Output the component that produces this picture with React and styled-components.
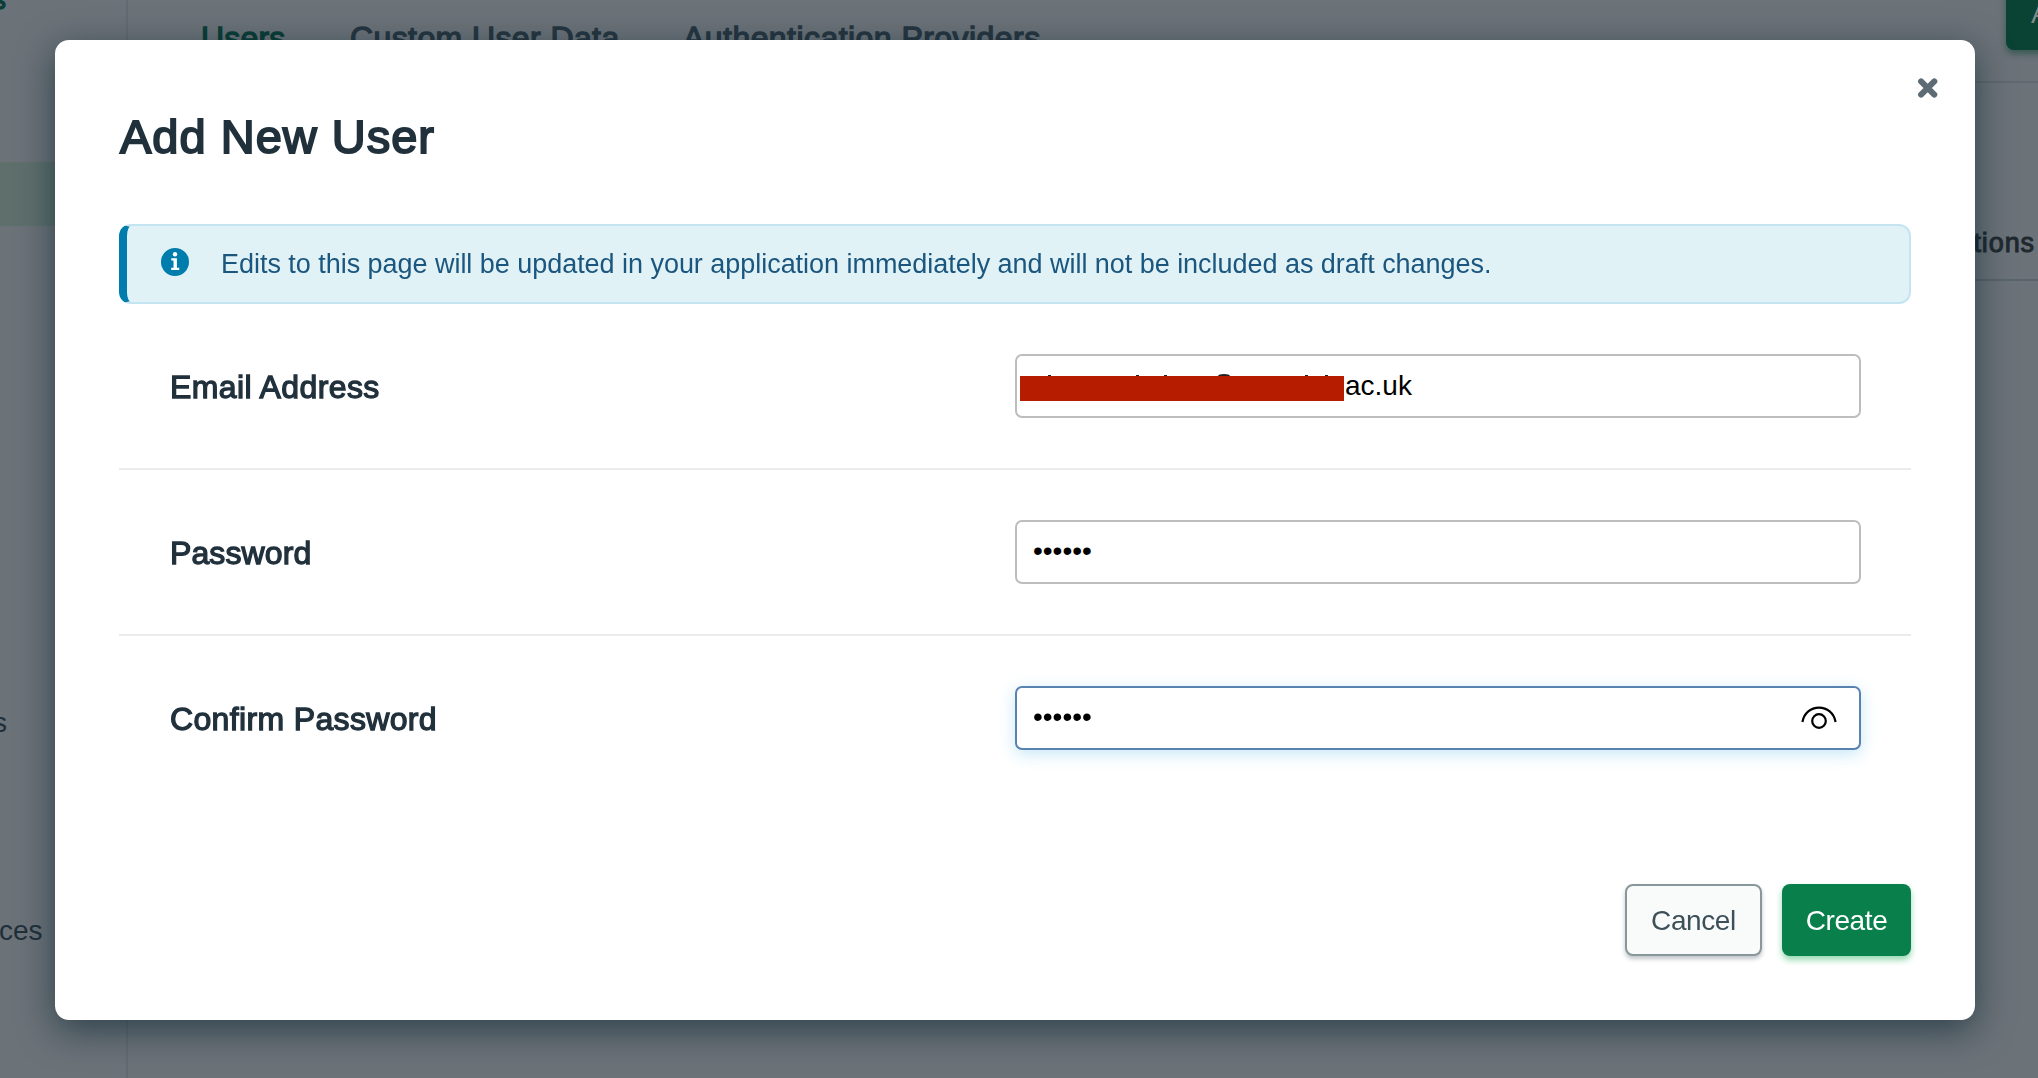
import React from "react";
import styled, { createGlobalStyle } from "styled-components";

const GlobalStyle = createGlobalStyle`
  *, *::before, *::after { box-sizing: border-box; }
  html, body { margin: 0; padding: 0; }
  body {
    background: #6b7278;
    font-family: "Liberation Sans", Arial, sans-serif;
    overflow: hidden;
  }
`;

const Page = styled.div`
  display: flex;
  width: 100%;
  height: 1078px;
  background: #6b7278;
  overflow: hidden;
`;

const Sidebar = styled.aside`
  flex: 0 0 128px;
  display: flex;
  flex-direction: column;
  border-right: 2px solid #616c72;
`;

const SidebarItem = styled.div`
  flex: none;
  height: ${(p) => p.$height}px;
  line-height: ${(p) => p.$height}px;
  padding-left: ${(p) => p.$indent || 0}px;
  margin-top: ${(p) => p.$gap || 0}px;
  margin-left: -20px;
  font-size: 28px;
  color: ${(p) => (p.$brand ? "#0b3d36" : "#20303a")};
  -webkit-text-stroke: ${(p) => (p.$brand ? "1.2px" : "0")};
  background: ${(p) => (p.$active ? "#5e6f6c" : "transparent")};
`;

const Main = styled.main`
  flex: 1;
  min-width: 0;
  display: flex;
  flex-direction: column;
`;

const TabBar = styled.nav`
  display: flex;
  height: 83px;
  padding: 14px 0 0 73px;
  border-bottom: 2px solid #5f696f;
`;

const Tab = styled.div`
  flex: none;
  width: ${(p) => p.$width}px;
  font-size: 32px;
  line-height: 48px;
  letter-spacing: ${(p) => p.$tracking}px;
  white-space: nowrap;
  color: ${(p) => (p.$active ? "#0b3d36" : "#263640")};
  -webkit-text-stroke: 1.3px;
`;

const AddButton = styled.div`
  flex: none;
  width: 120px;
  height: 72px;
  margin: -36px 0 0 auto;
  margin-right: -88px;
  padding-left: 25px;
  line-height: 72px;
  border-radius: 8px;
  background: #0a4234;
  color: #7f8a8a;
  font-size: 28px;
  box-shadow: 0 4px 6px rgba(10, 66, 52, 0.5);
`;

const TableHead = styled.div`
  display: flex;
  justify-content: flex-end;
  height: 198px;
  padding: 143px 3px 0 0;
  border-bottom: 2px solid #59646c;
  font-size: 27px;
  line-height: 34px;
  letter-spacing: 0.9px;
  color: #20292f;
  -webkit-text-stroke: 1px;
`;

const Overlay = styled.div`
  position: fixed;
  inset: 0;
  display: flex;
  justify-content: center;
  align-items: flex-start;
  padding: 40px 63px 0 55px;
`;

const Modal = styled.section`
  position: relative;
  flex: 1;
  height: 980px;
  padding: 69px 64px 64px;
  display: flex;
  flex-direction: column;
  border-radius: 14px;
  background: #ffffff;
  box-shadow: 0 10px 36px rgba(0, 30, 43, 0.58);
`;

const CloseButton = styled.button`
  position: absolute;
  top: 38px;
  right: 37px;
  width: 20px;
  height: 20px;
  padding: 0;
  border: 0;
  background: none;
  svg { display: block; }
`;

const Title = styled.h1`
  margin: 0 0 59px;
  padding-left: 1px;
  font-size: 47px;
  line-height: 56px;
  font-weight: 400;
  letter-spacing: 1px;
  color: #21313c;
  -webkit-text-stroke: 1.9px #21313c;
`;

const Banner = styled.div`
  flex: none;
  display: flex;
  align-items: center;
  height: 80px;
  padding-left: 34px;
  border: 2px solid #c5e4f2;
  border-left: 8px solid #007cad;
  border-radius: 12px;
  background: #e1f2f6;
  color: #1a567e;
  font-size: 27px;
  letter-spacing: -0.035px;
  white-space: nowrap;
`;

const InfoIcon = styled.svg`
  flex: none;
  margin: -4px 32px 0 0;
`;

const Row = styled.div`
  flex: none;
  display: flex;
  align-items: center;
  justify-content: space-between;
  height: 166px;
  padding: 0 50px;
  border-bottom: ${(p) => (p.$last ? "0" : "2px solid #ebebeb")};
  padding-bottom: ${(p) => (p.$last ? "2px" : "0")};
`;

const Label = styled.label`
  padding: 2px 0 0 1px;
  font-size: 32px;
  letter-spacing: ${(p) => p.$tracking}px;
  color: #21313c;
  -webkit-text-stroke: 1.3px #21313c;
`;

const Field = styled.div`
  position: relative;
  display: flex;
  align-items: center;
  justify-content: space-between;
  width: 846px;
  height: 64px;
  padding: 0 22px 0 16px;
  border: 2px solid ${(p) => (p.$focused ? "#5a82b0" : "#bdbdbd")};
  border-radius: 7px;
  background: #ffffff;
  box-shadow: ${(p) => (p.$focused ? "0 4px 16px rgba(67, 177, 229, 0.3)" : "none")};
  color: #000000;
  font-size: 28px;
`;

const Value = styled.span`
  padding-left: ${(p) => p.$offset || 0}px;
  padding-bottom: ${(p) => (p.$masked ? 2 : 0)}px;
`;

const Redaction = styled.div`
  position: absolute;
  left: 3px;
  top: 20px;
  width: 324px;
  height: 25px;
  background: #b51c00;
`;

const Tick = styled.i`
  position: absolute;
  left: ${(p) => p.$x}px;
  top: ${(p) => (p.$wide ? -2 : -1)}px;
  width: ${(p) => (p.$wide ? 12 : 3)}px;
  height: ${(p) => (p.$wide ? 2 : 1)}px;
  border-radius: ${(p) => (p.$wide ? "6px 6px 0 0 / 2px 2px 0 0" : "0")};
  background: #222222;
`;

const Footer = styled.footer`
  display: flex;
  justify-content: flex-end;
  gap: 20px;
  margin-top: auto;
`;

const Button = styled.button`
  width: ${(p) => p.$width}px;
  height: 72px;
  padding: 2px 0 0;
  border: ${(p) => (p.$primary ? "0" : "2px solid #89979b")};
  border-radius: 8px;
  background: ${(p) => (p.$primary ? "#09804c" : "#f9fbfa")};
  color: ${(p) => (p.$primary ? "#ffffff" : "#3d4f58")};
  box-shadow: ${(p) =>
    p.$primary ? "0 4px 6px rgba(19, 170, 82, 0.45)" : "0 3px 4px rgba(33, 49, 60, 0.28)"};
  font-family: inherit;
  font-size: 28px;
  letter-spacing: -0.4px;
`;

const TICKS = [28, 116, 144, 285, 305];

export default function App() {
  return (
    <>
      <GlobalStyle />
      <Page>
        <Sidebar>
          <SidebarItem $height={40} $gap={-20} $indent={12} $brand>s</SidebarItem>
          <SidebarItem $height={64} $gap={142} $active />
          <SidebarItem $height={40} $gap={477} $indent={13}>s</SidebarItem>
          <SidebarItem $height={40} $gap={168} $indent={19}>ces</SidebarItem>
        </Sidebar>
        <Main>
          <TabBar>
            <Tab $width={149} $tracking={0.2} $active>Users</Tab>
            <Tab $width={333} $tracking={0.4}>Custom User Data</Tab>
            <Tab $width={380} $tracking={0.45}>Authentication Providers</Tab>
            <AddButton>Add</AddButton>
          </TabBar>
          <TableHead>Actions</TableHead>
        </Main>
      </Page>
      <Overlay>
        <Modal role="dialog">
          <CloseButton aria-label="Close">
            <svg width="20" height="20" viewBox="0 0 20 20">
              <path d="M3.1 3.4 16.3 16.6M16.3 3.4 3.1 16.6" stroke="#5d6c74" strokeWidth="6" strokeLinecap="round" />
            </svg>
          </CloseButton>
          <Title>Add New User</Title>
          <Banner>
            <InfoIcon width="28" height="28" viewBox="0 0 28 28">
              <circle cx="14" cy="14" r="14" fill="#007cad" />
              <circle cx="14" cy="6.2" r="2.2" fill="#fff" />
              <path d="M10.3 10.2h5.6v9.6h2.3V22h-8v-2.2h2.3v-7.3h-2.2z" fill="#fff" />
            </InfoIcon>
            <span>Edits to this page will be updated in your application immediately and will not be included as draft changes.</span>
          </Banner>
          <Row>
            <Label $tracking={0.4}>Email Address</Label>
            <Field>
              <Value $offset={312}>ac.uk</Value>
              <Redaction>
                {TICKS.map((x) => <Tick key={x} $x={x} />)}
                <Tick $x={198} $wide />
              </Redaction>
            </Field>
          </Row>
          <Row>
            <Label $tracking={0.1}>Password</Label>
            <Field><Value $masked>••••••</Value></Field>
          </Row>
          <Row $last>
            <Label $tracking={0.35}>Confirm Password</Label>
            <Field $focused>
              <Value $masked>••••••</Value>
              <svg width="36" height="26" viewBox="0 0 36 26" fill="none" stroke="#000" strokeWidth="2.2">
                <path d="M1.4 17C3 8 10 2.6 18 2.6S33 8 34.6 17" />
                <circle cx="18" cy="16" r="6.8" />
              </svg>
            </Field>
          </Row>
          <Footer>
            <Button $width={137}>Cancel</Button>
            <Button $width={129} $primary>Create</Button>
          </Footer>
        </Modal>
      </Overlay>
    </>
  );
}
